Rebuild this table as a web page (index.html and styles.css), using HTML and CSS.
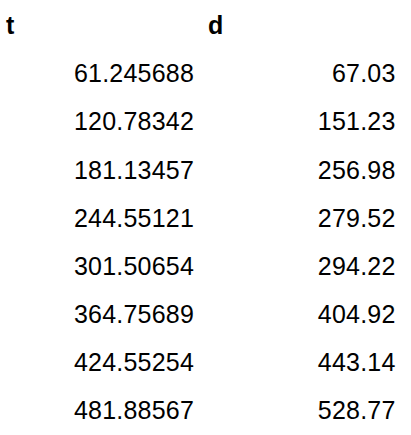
FILE: index.html
```html
<!DOCTYPE html>
<html>
<head>
<meta charset="utf-8">
<link rel="stylesheet" href="styles.css">
</head>
<body>
<table class="data">
  <thead>
    <tr class="head-row"><th class="c1">t</th><th class="c2">d</th></tr>
  </thead>
  <tbody>
    <tr><td>61.245688</td><td>67.03</td></tr>
    <tr><td>120.78342</td><td>151.23</td></tr>
    <tr><td>181.13457</td><td>256.98</td></tr>
    <tr><td>244.55121</td><td>279.52</td></tr>
    <tr><td>301.50654</td><td>294.22</td></tr>
    <tr><td>364.75689</td><td>404.92</td></tr>
    <tr><td>424.55254</td><td>443.14</td></tr>
    <tr><td>481.88567</td><td>528.77</td></tr>
  </tbody>
</table>
</body>
</html>
```
FILE: styles.css
```css
html, body {
  margin: 0;
  padding: 0;
  background: #fff;
}
.data {
  border-collapse: collapse;
  table-layout: fixed;
  width: 403.5px;
  font-family: "Liberation Sans", Arial, sans-serif;
  font-size: 25px;
  color: #000;
}
.data th,
.data td {
  padding: 0 8px 0 6px;
  white-space: nowrap;
}
.data .c1 {
  width: 188px;
}
.data th {
  font-weight: bold;
  text-align: left;
  padding-top: 3.4px;
  line-height: 45.86px;
  height: 45.86px;
  vertical-align: top;
}
.data td {
  text-align: right;
  letter-spacing: 0.2px;
  line-height: 48.15px;
  height: 48.15px;
  vertical-align: top;
}
```
